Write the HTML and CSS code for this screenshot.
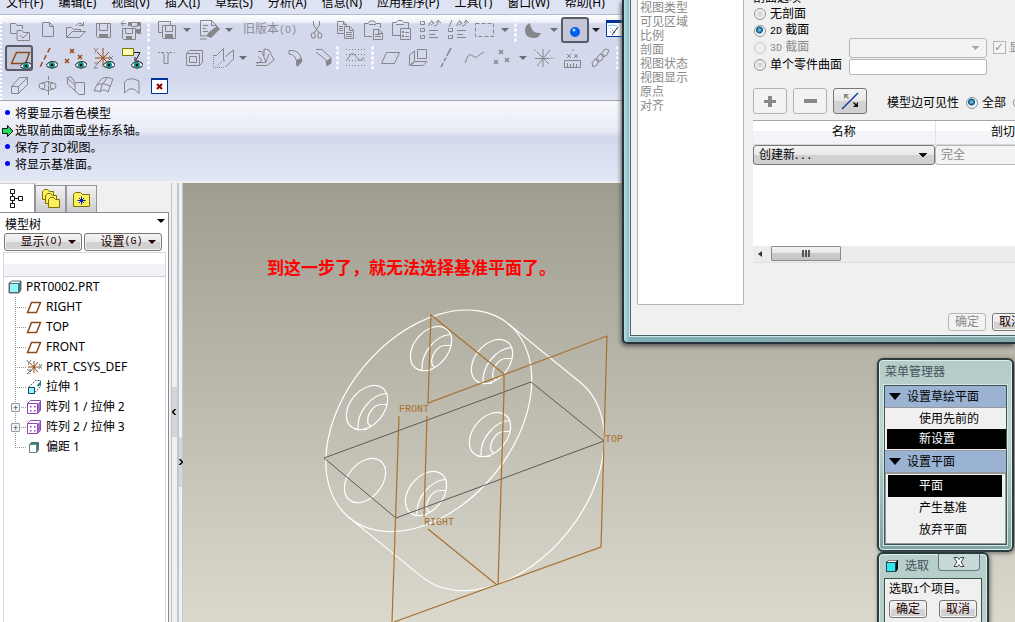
FILE: index.html
```html
<!DOCTYPE html>
<html lang="zh-CN">
<head>
<meta charset="utf-8">
<title>PRT0002.PRT</title>
<link rel="stylesheet" href="styles.css">
</head>
<body>
<svg class="defs" aria-hidden="true">
  <defs>
    <symbol id="i-plane" viewBox="0 0 16 14"><path d="M1.5 12.5L5.500 2.500H14.500L10.500 12.500Z" fill="none" stroke="#8a4a20" stroke-width="1.500"/></symbol>
    <symbol id="i-csys" viewBox="0 0 16 14"><path d="M8 1V13M2 7H14M4 3L12 12M12 2L4 12" fill="none" stroke="#8a4a20" stroke-width="1"/><path d="M1 0l2 3 2-3M3 3l-1 2M1 10h4l-4 4h4M13 4l3 5M16 4l-3 5" fill="none" stroke="#777"/></symbol>
    <symbol id="i-pattern" viewBox="0 0 14 14"><path d="M.5 3.500L3.500.500H13.500V10.500L10.500 13.500H.500Z" fill="#fff" stroke="#8a4ab0"/><path d="M11 3.500L13 1.500V10.500L11 12.500Z" fill="#a070c8"/><path d="M.500 3.500H10.500V13.500" fill="none" stroke="#8a4ab0"/><path d="M3 6h1.500v1.500H3zM7 6h1.500v1.500H7zM3 10h1.500v1.500H3zM7 10h1.500v1.500H7z" fill="#b030d8"/></symbol>
    <symbol id="i-eye" viewBox="0 0 12 8"><path d="M0 4Q6-3 12 3L11 6Q6 9 1 6Z" fill="#fff"/><path d="M0 4Q6-2 11 2L12 4M1 5Q6 9 11 5" fill="none" stroke="#333"/><circle cx="6" cy="4" r="3" fill="#109080" stroke="none"/><path d="M5 3h2v2H5z" fill="#003" stroke="none"/></symbol>
    <symbol id="i-arrow" viewBox="0 0 8 4"><path d="M0 0H8L4 4Z" fill="currentColor" stroke="none"/></symbol>
    <g id="hole-front" fill="none" stroke="#fff" stroke-width="1.200"><ellipse rx="25" ry="17" transform="rotate(-50.600)"/></g>
    <g id="hole"><use href="#hole-front"/><path d="M-9 21C-10 4 5-13 19-14M4 19L1 16C-1 7 7-3 14-3H20M-10 22H0" fill="none" stroke="#fff" stroke-width="1.200"/></g>
  </defs>
</svg>

<div class="app">
  <nav class="menubar">
    <button>文件(F)</button><button>编辑(E)</button><button>视图(V)</button><button>插入(I)</button><button>草绘(S)</button><button>分析(A)</button><button>信息(N)</button><button>应用程序(P)</button><button>工具(T)</button><button>窗口(W)</button><button>帮助(H)</button>
  </nav>

  <div class="toolbars">
    <div class="toolrow">
      <button class="tool" aria-label="设置工作目录"><svg viewBox="0 0 28 28"><path d="M17.500 13V9.500H12L10.500 7.500H5.500V17.500H11M12 23.500V14.500H17L18.500 16.500H24.500V24.500H12.500ZM15 19l3 3 5-5"/></svg></button>
      <button class="tool" aria-label="新建"><svg viewBox="0 0 28 28"><path d="M9.500 6.500H16.500L20.500 10.500V20.500H9.500ZM16.500 6.500V10.500H20.500"/></svg></button>
      <button class="tool" aria-label="打开"><svg viewBox="0 0 28 28"><path d="M5.500 21.500V11.500H10.500L12.500 13.500H19.500V15.500M5.500 21.500L11.500 15.500H24.500L18.500 21.500ZM15 10Q18 5 22 9M22.500 6V9.500H18"/></svg></button>
      <button class="tool" aria-label="保存"><svg viewBox="0 0 28 28"><path d="M7.500 7.500H21.500V21.500H8.500L7.500 20.500ZM10.500 7.500V14.500H18.500V7.500"/><path class="f" d="M10 18h9v4h-9z"/></svg></button>
      <button class="tool" aria-label="保存副本"><svg viewBox="0 0 28 28"><path d="M5.500 12.500H18.500V23.500H6.500L5.500 22.500ZM8.500 12.500V17.500H15.500V12.500M11.500 10V6.500H23.500V17.500H20M4 7.500H9M7 4.500L4 7.500L7 10M14.500 7V10.500H20.500V7"/><path class="f" d="M9 20h6v4H9zM18 13h5v4h-5zM12 7h3v3h-3zM20 7h3v3h-3z"/></svg></button>
      <i class="grip"></i>
      <button class="tool" aria-label="保存状态"><svg viewBox="0 0 28 28"><path d="M10.500 16.500H6.500V5.500H18.500V9M10.500 9.500H23.500V22.500H11.500L10.500 21.500ZM13.500 9.500V15.500H20.500V9.500"/><path class="f" d="M13 18h8v4h-8z"/></svg></button>
      <button class="drop" aria-label="更多"><svg><use href="#i-arrow"/></svg></button>
      <button class="tool" aria-label="编辑"><svg viewBox="0 0 28 28"><path d="M12 20H6.500V4.500H17.500L22.500 9.500V11M17.500 4.500V9.500H22.500M9 9.500h5M9 12.500h3M9 15.500h5M6 23h7"/><path class="f" d="M23 10l3 3-9 9-5-2 3-4z"/></svg></button>
      <button class="drop" aria-label="更多"><svg><use href="#i-arrow"/></svg></button>
      <button class="version" disabled>旧版本<span class="mono">(O)</span></button>
      <button class="tool" aria-label="剪切"><svg viewBox="0 0 28 28"><path d="M11.500 5L11.500 9L17 17M17.500 5V9L12 17M13 16L9 18L10 22H13V17M16 16L20 18L19 22H16V17"/></svg></button>
      <button class="tool" aria-label="复制"><svg viewBox="0 0 28 28"><path d="M14 17.500H7.500V5.500H13.500L16.500 8.500V10M14.500 10.500H20L23.500 14V22.500H14.500ZM13.500 5.500V8.500H16.500M19.500 10.500V14.500H23.500M9 10.500h4M9 12.500h4M9 14.500h4M16 16.500h6M16 18.500h6M16 20.500h6"/></svg></button>
      <button class="tool" aria-label="粘贴"><svg viewBox="0 0 28 28"><path d="M14 20.500H6.500V7.500H10L12 5H16L18 7.500H22.500V12M11 8.500H18M15.500 13.500H21L24.500 17V23.500H15.500ZM20.500 13.500V17.500H24.500M17 18.500h5M17 20.500h6"/></svg></button>
      <button class="tool" aria-label="选择性粘贴"><svg viewBox="0 0 28 28"><path d="M14 19.500H6.500V6.500H10L12 4.500H16L18 6.500H22.500V12M10 8.500H18M14.500 12.500H24.500V23.500H14.500ZM19 16.500h4M19 20.500h4"/><path class="f" d="M16 15h2v2h-2zM16 19h2v2h-2z"/></svg></button>
      <button class="tool" aria-label="再生"><svg viewBox="0 0 28 28"><path d="M6.500 5V8.500H10.500V5.500H8M6.500 12V15.500H10.500V12.500H8M6.500 19V22.500H10.500V19.500H8M15 10Q15 5 19 6M17 4l3 3-3 2M20 10Q25 9 24 5M22 7l2-3 3 3M15 14.500h9M15 18.500h6M15 21.500h9"/></svg></button>
      <button class="tool" aria-label="再生管理器"><svg viewBox="0 0 28 28"><path d="M7 11l3-7M6.500 12V15.500H10.500V12.500H8M6.500 19V22.500H10.500V19.500H8M15 10Q15 5 19 6M17 4l3 3-3 2M20 10Q25 9 24 5M22 7l2-3 3 3M15 14.500h9M15 18.500h6M15 21.500h9"/></svg></button>
      <button class="tool" aria-label="选择框"><svg viewBox="0 0 28 28"><path stroke-dasharray="4 2" d="M5.500 7.500H23.500V20.500H5.500Z"/></svg></button>
      <button class="drop" aria-label="更多"><svg><use href="#i-arrow"/></svg></button>
      <i class="grip"></i>
      <button class="tool" aria-label="着色"><svg viewBox="0 0 28 28"><path class="f" d="M11 7Q6 9 6 14Q6 22 15 22Q20 22 22 17Q12 18 11 7Z"/></svg></button>
      <button class="drop" aria-label="更多"><svg><use href="#i-arrow"/></svg></button>
      <button class="tool pressed" aria-label="显示样式"><svg viewBox="0 0 28 28"><circle cx="14" cy="16" r="5" fill="#0060f0" stroke="none"/><circle cx="13" cy="14" r="1.500" fill="#b0e0ff" stroke="none"/></svg></button>
      <button class="drop dark" aria-label="更多"><svg><use href="#i-arrow"/></svg></button>
      <button class="tool" aria-label="重定向"><svg viewBox="0 0 28 28"><path d="M3.500 5.500H23V20.500H3.500Z" fill="#fff" stroke="#003399"/><path d="M3 4h20v3H3z" fill="#003399" stroke="none"/><path d="M5 10Q9 8 14 10" stroke="#80c0e8"/><path stroke-dasharray="1 2" d="M7 12l6 6M7 16h6" stroke="#2070c0"/><path d="M9 19l6-8" stroke="#223"/></svg></button>
    </div>
    <div class="toolrow">
      <button class="tool pressed" aria-label="基准平面显示"><svg viewBox="0 0 28 28"><path d="M6.500 19.500L11.500 8.500H24.500L20.500 19.500Z" stroke="#8a4a20" stroke-width="1.500"/><use href="#i-eye" x="15" y="18" width="12" height="8"/></svg></button>
      <button class="tool" aria-label="基准轴显示"><svg viewBox="0 0 28 28"><path d="M17 4L7 23" stroke="#a04a10" stroke-width="1.500" stroke-dasharray="5 3"/><use href="#i-eye" x="13" y="17" width="12" height="8"/></svg></button>
      <button class="tool" aria-label="基准点显示"><svg viewBox="0 0 28 28"><path d="M9 5l4 4m0-4l-4 4M4 15l4 4m0-4l-4 4M17 11l4 4m0-4l-4 4" stroke="#a04a10" stroke-width="1.500"/><use href="#i-eye" x="14" y="17" width="12" height="8"/></svg></button>
      <button class="tool" aria-label="坐标系显示"><svg viewBox="0 0 28 28"><path d="M14 4V23M6 14H22M8 8l12 12M20 8L8 20" stroke="#a04a10"/><path d="M5 4l2 3 2-3M7 7l-1 2M5 19h4l-4 5h4M20 12l4 4m0-4l-4 4"/><use href="#i-eye" x="14" y="17" width="12" height="8"/></svg></button>
      <button class="tool" aria-label="注释显示"><svg viewBox="0 0 28 28"><path d="M5.500 4.500H16.500V11.500H5.500Z" fill="#ffffb8" stroke="#777700"/><path d="M17 8.500H23L19 16M18 13v4h4" stroke="#222"/><use href="#i-eye" x="14" y="17" width="12" height="8"/></svg></button>
      <i class="grip"></i>
      <button class="tool" aria-label="孔"><svg viewBox="0 0 28 28"><path d="M9 8.500Q12 8 12 12V19.500H16V12Q16 8 19 8.500"/><path stroke-dasharray="2 2" d="M6 8.500H23"/></svg></button>
      <button class="tool" aria-label="壳"><svg viewBox="0 0 28 28"><path d="M6.500 9.500L9.500 6.500H22.500V18.500L19.500 21.500H6.500ZM6.500 9.500H19.500V21.500M9.500 12.500H16.500V18.500H9.500Z"/></svg></button>
      <button class="tool" aria-label="筋"><svg viewBox="0 0 28 28"><path stroke-dasharray="1 1" d="M5.500 11V23.500H17M15.500 16.500L8.500 22"/><path d="M5 11.500H8.500L15.500 4.500V16.500M15.500 16.500H17M17.500 23L25.500 15V6L17.500 12.500"/></svg></button>
      <button class="drop" aria-label="更多"><svg><use href="#i-arrow"/></svg></button>
      <button class="tool" aria-label="拔模"><svg viewBox="0 0 28 28"><path d="M8 7.500H12L16 18.500H6M6 21.500H17L24 16L19 6L14 5V12M16 18L19 10M8 12.500L12 16L7 20"/></svg></button>
      <button class="tool" aria-label="倒圆角"><svg viewBox="0 0 28 28"><path d="M11 6.500Q22 5 24 17L19 22Q19 10 11 10Z"/><path class="f" d="M18 16l6-2v4l-5 5z"/></svg></button>
      <button class="tool" aria-label="倒角"><svg viewBox="0 0 28 28"><path d="M10 5.500H16L25 14V19L21 22L20 16L10 8"/><path class="f" d="M20 17l5-3v5l-4 3z"/></svg></button>
      <i class="grip"></i>
      <button class="tool" aria-label="草绘"><svg viewBox="0 0 28 28"><path stroke-dasharray="1 2" d="M5 5.500H24M5 10.500H24M5 16.500H24M5 21.500H24"/><path d="M6 16L10 10H13L18 16H21L23 13"/></svg></button>
      <i class="grip"></i>
      <button class="tool" aria-label="平面"><svg viewBox="0 0 28 28"><path d="M5.500 19.500L10.500 8.500H23.500L18.500 19.500Z"/></svg></button>
      <button class="tool" aria-label="组合"><svg viewBox="0 0 28 28"><path d="M13.500 5.500H22.500V14.500H13.500ZM5.500 11L10.500 7V17L5.500 21.500ZM7 21.500H19L23 17.500H11Z"/></svg></button>
      <button class="tool" aria-label="轴"><svg viewBox="0 0 28 28"><path stroke-width="1.500" stroke-dasharray="9 2 4 2" d="M19 4L9 23"/></svg></button>
      <button class="tool" aria-label="曲线"><svg viewBox="0 0 28 28"><path d="M5 19L8 12Q10 9 13 12Q16 15 19 11L24 8"/></svg></button>
      <button class="tool" aria-label="点"><svg viewBox="0 0 28 28"><path stroke-width="1.500" d="M11 6l4 4m0-4l-4 4M6 16l4 4m0-4l-4 4M17 14l4 4m0-4l-4 4"/></svg></button>
      <button class="drop" aria-label="更多"><svg><use href="#i-arrow"/></svg></button>
      <button class="tool" aria-label="坐标系"><svg viewBox="0 0 28 28"><path d="M13 5V23M5 14.500H20M7 8l12 12M20 6L7 22"/><path stroke-dasharray="1 1" d="M21 14h4M4 5l3 3"/></svg></button>
      <button class="tool" aria-label="分析"><svg viewBox="0 0 28 28"><path d="M6.500 16.500H22.500V23.500H6.500ZM9.500 19v4M12.500 20v3M15.500 19v4M18.500 20v3M9 10l4 4m0-4l-4 4M16 10l4 4m0-4l-4 4M15 5v2"/></svg></button>
      <button class="tool" aria-label="参照"><svg viewBox="0 0 28 28"><path d="M6 19l3-4 4 1-2 5-4 2zM10 15l4-5 4 1-2 5-4 2zM15 10l4-5 4 1-2 5-4 2z"/></svg></button>
      <i class="grip"></i>
    </div>
    <div class="toolrow">
      <button class="tool" aria-label="拉伸"><svg viewBox="0 0 28 28"><path d="M6.500 14.500H13.500V21.500H6.500ZM6.500 14.500L14.500 5.500H22.500V12.500L13.500 21.500M13.500 14.500L22.500 5.500"/></svg></button>
      <button class="tool" aria-label="旋转"><svg viewBox="0 0 28 28"><circle cx="9" cy="14" r="3"/><circle cx="20" cy="14" r="3"/><path stroke-dasharray="4 1" d="M15.500 4V23"/><path d="M9 11Q15 8 20 11M9 17Q15 20 20 17"/></svg></button>
      <button class="tool" aria-label="扫描混合"><svg viewBox="0 0 28 28"><path d="M5.500 6L10 4.500L14 10.500H23.500V22.500H18L6.500 12V6M14 10.500V19M6 6L14 13"/></svg></button>
      <button class="tool" aria-label="边界混合"><svg viewBox="0 0 28 28"><path d="M5 19Q9 9 14 6Q19 4 24 7L19 20Q14 16 11 20Q8 18 5 19ZM8 13Q13 10 21 14M18 6Q12 12 11 20"/></svg></button>
      <button class="tool" aria-label="造型"><svg viewBox="0 0 28 28"><path d="M7.500 21V10Q12 4 22 9V21.500L17 17H12Z"/></svg></button>
      <button class="tool" aria-label="关闭"><svg viewBox="0 0 28 28"><path d="M6.500 6.500H22.500V21.500H6.500Z" fill="#fff" stroke="#003399"/><path d="M6 6h17v2H6z" fill="#003399" stroke="none"/><path d="M12 12l5 5m0-5l-5 5" stroke="#900000" stroke-width="2"/></svg></button>
    </div>
  </div>

  <ul class="messages">
    <li>将要显示着色模型</li>
    <li class="current"><svg viewBox="0 0 12 12"><path d="M.500 3.500H5.500V.500L11 6L5.500 11.500V8.500H.500Z" fill="#20e060" stroke="#111"/></svg>选取前曲面或坐标系轴。</li>
    <li>保存了3D视图。</li>
    <li>将显示基准面。</li>
  </ul>

  <main class="workspace">
    <aside class="sidebar">
      <div class="tabs">
        <button class="tab active" aria-label="模型树"><svg viewBox="0 0 16 20"><path d="M3.500 5V15M5 10.500H10" fill="none" stroke="#111"/><path d="M1.500 1.500h4v4h-4zM1.500 8.500h4v4h-4zM1.500 15.500h4v4h-4zM9.500 8.500h4v4h-4z" fill="#fff" stroke="#111"/></svg></button>
        <button class="tab" aria-label="文件夹浏览器"><svg viewBox="0 0 20 20"><path d="M1.500 10.500V2.500L3.500.500H6.500L8.500 2.500H12.500V10.500Z" fill="#fff060" stroke="#7c7000"/><path d="M4.500 14.500V6.500L6.500 4.500H9.500L11.500 6.500H15.500V14.500Z" fill="#fff060" stroke="#7c7000"/><path d="M7.500 18.500V10.500L9.500 8.500H12.500L14.500 10.500H18.500V18.500Z" fill="#fff060" stroke="#7c7000"/></svg></button>
        <button class="tab" aria-label="收藏夹"><svg viewBox="0 0 20 20"><path d="M1.500 17.500V5.500L3.500 3.500H8.500L10.500 5.500H17.500V17.500Z" fill="#fff060" stroke="#7c7000"/><path d="M9.500 7.500v8M5.500 11.500h8M7 9l5 5M12 9l-5 5" stroke="#0020b0"/></svg></button>
      </div>
      <div class="panel">
        <div class="panel-head"><span>模型树</span><svg class="caret"><use href="#i-arrow"/></svg></div>
        <div class="panel-buttons">
          <button class="btn">显示<span class="mono">(O)</span><svg class="caret"><use href="#i-arrow"/></svg></button>
          <button class="btn">设置<span class="mono">(G)</span><svg class="caret"><use href="#i-arrow"/></svg></button>
        </div>
        <div class="tree-box">
          <div class="tree-head"></div>
          <div class="root"><svg viewBox="0 0 14 14"><path d="M1 3L4 1H13V10L11 13H1Z" fill="#208888" stroke="#667"/><path d="M2 3L4 1.500H12L11 3Z" fill="#e8ffff"/><path d="M1.500 3.500H10.500V12.500H1.500Z" fill="#90f8f8" stroke="#667"/></svg>PRT0002.PRT</div>
          <ul class="tree">
            <li><svg><use href="#i-plane"/></svg>RIGHT</li>
            <li><svg><use href="#i-plane"/></svg>TOP</li>
            <li><svg><use href="#i-plane"/></svg>FRONT</li>
            <li><svg><use href="#i-csys"/></svg>PRT_CSYS_DEF</li>
            <li><svg viewBox="0 0 16 14"><path d="M2.500 7.500H8.500V13.500H2.500Z" fill="#90f8f8" stroke="#246"/><path d="M2.500 7.500L9.500.500H14.500V6.500L8.500 13" fill="none" stroke="#555" stroke-dasharray="2 1"/><path d="M11 5l4-4v3l-3 3z" fill="#208888"/></svg>拉伸 1</li>
            <li><button class="expand" aria-label="展开">+</button><svg><use href="#i-pattern"/></svg>阵列 1 / 拉伸 2</li>
            <li><button class="expand" aria-label="展开">+</button><svg><use href="#i-pattern"/></svg>阵列 2 / 拉伸 3</li>
            <li><svg viewBox="0 0 16 14"><path d="M3.500 4.500L5.500 2.500H12.500V9.500L10.500 12.500H3.500Z" fill="#208888" stroke="#666"/><path d="M3.500 4.500H10.500V12.500H3.500Z" fill="#fff" stroke="#687"/></svg>偏距 1</li>
          </ul>
        </div>
      </div>
    </aside>
    <div class="splitter"><button aria-label="收起"><svg viewBox="0 0 4 6"><path d="M3.500 0L.500 3L3.500 6"/></svg></button></div>
    <div class="splitter second"><button aria-label="展开"><svg viewBox="0 0 4 6"><path d="M.500 0L3.500 3L.500 6"/></svg></button></div>
    <section class="canvas">
      <svg viewBox="183 183 832 439" width="832" height="439">
        <g fill="none" stroke="#fff" stroke-width="1.200">
          <ellipse cx="428.800" cy="420.800" rx="125.400" ry="84.600" transform="rotate(-50.600 428.800 420.800)"/>
          <path d="M508.200 323.700L580.700 382.700A125.400 84.600 -50.600 0 1 421.900 576.900L349.400 517.900"/>
        </g>
        <use href="#hole" x="431" y="348.500"/><use href="#hole" x="492" y="361.500"/><use href="#hole" x="367" y="407.500"/><use href="#hole" x="490" y="434.500"/><use href="#hole-front" x="365" y="480.500"/><use href="#hole" x="426" y="493.500"/>
        <path d="M324 458L531 382L604 441L396 518Z" fill="none" stroke="#5e5a55"/>
        <path d="M504 374L431 315L428 403L607 336L601 547L394 622M504 374L504 392L498 585M399 416L392 622M427 416L424 517M428 529L497 585" fill="none" stroke="#a8702f" stroke-width="1.200"/>
        <g class="labels"><text x="399" y="412">FRONT</text><text x="605" y="442">TOP</text><text x="424" y="525">RIGHT</text></g>
        <text class="note" x="267" y="274">到这一步了，就无法选择基准平面了。</text>
      </svg>
    </section>
  </main>
</div>

<section class="window dialog">
  <div class="dialog-body">
    <ul class="categories"><li>视图类型</li><li>可见区域</li><li>比例</li><li>剖面</li><li>视图状态</li><li>视图显示</li><li>原点</li><li>对齐</li></ul>
    <form class="options">
      <h2>剖面选项</h2>
      <div class="choices">
        <label><input type="radio" name="sec">无剖面</label>
        <label><input type="radio" name="sec" checked><span><span class="mono">2D</span> 截面</span></label>
        <label class="off"><input type="radio" name="sec" disabled><span><span class="mono">3D</span> 截面</span></label>
        <label><input type="radio" name="sec">单个零件曲面</label>
        <select class="section-select" aria-label="截面" disabled><option></option></select>
        <label class="off show"><input type="checkbox" checked disabled>显示</label>
        <input class="surface" type="text" aria-label="曲面">
      </div>
      <div class="actions">
        <button type="button" class="square" disabled aria-label="添加"><svg viewBox="0 0 32 24"><path d="M10 11H14V7H18V11H22V14H18V18H14V14H10Z" fill="#888"/></svg></button>
        <button type="button" class="square" disabled aria-label="移除"><svg viewBox="0 0 32 24"><path d="M10 10H23V14H10Z" fill="#888"/></svg></button>
        <button type="button" class="square live" aria-label="反向"><svg viewBox="0 0 32 24"><path d="M8 20L24 4" stroke="#1238a8" stroke-width="1.500"/><path d="M10 5h5l-2 2 2 2-1 1-2-2-2 2z" fill="#8a8a80"/><path d="M24 18v-5l-2 2-2-2-1 1 2 2-2 2z" fill="#111"/></svg></button>
        <span class="edge-label">模型边可见性</span>
        <label><input type="radio" name="edge" checked>全部</label>
        <label><input type="radio" name="edge">区域</label>
      </div>
      <div class="grid">
        <table>
          <thead><tr><th>名称</th><th>剖切区域</th></tr></thead>
          <tbody><tr><td><select aria-label="名称"><option>创建新. . .</option></select></td><td><select aria-label="剖切区域" disabled><option>完全</option></select></td></tr></tbody>
        </table>
        <div class="scrollbar"><svg viewBox="0 0 4 6"><path d="M4 0V6L0 3Z" fill="#333"/></svg><span class="thumb"><svg viewBox="0 0 8 7"><path d="M1 0V7M4 0V7M7 0V7" stroke="#555" stroke-width="2"/></svg></span></div>
      </div>
      <div class="footer"><button type="button" class="btn" disabled>确定</button><button type="button" class="btn">取消</button></div>
    </form>
  </div>
</section>

<section class="window manager">
  <h2>菜单管理器</h2>
  <div class="menu">
    <h3><svg viewBox="0 0 12 7"><path d="M0 0H12L6 7Z"/></svg>设置草绘平面</h3>
    <div class="items"><button>使用先前的</button><button class="on">新设置</button></div>
    <h3><svg viewBox="0 0 12 7"><path d="M0 0H12L6 7Z"/></svg>设置平面</h3>
    <div class="items tall"><button class="on">平面</button><button>产生基准</button><button>放弃平面</button></div>
  </div>
</section>

<section class="window picker">
  <header><svg class="cube" viewBox="0 0 14 14"><path d="M1 3L4 1H13V10L11 13H1Z" fill="#111"/><path d="M1.500 3.500H10.500V12.500H1.500Z" fill="#30e8f0" stroke="#245"/><path d="M2 3L4 1.500H12L11 3Z" fill="#fff"/></svg><h2>选取</h2><button class="close" aria-label="关闭"><svg viewBox="0 0 12 10"><path d="M1 .500H4.500L6 2.500L7.500.500H11L8 5L11 9.500H7.500L6 7.500L4.500 9.500H1L4 5Z" fill="#fff" stroke="#444"/></svg></button></header>
  <div class="picker-body">
    <p>选取<span class="mono">1</span>个项目。</p>
    <div class="picker-actions"><button class="btn">确定</button><button class="btn">取消</button></div>
  </div>
</section>
</body>
</html>
```
FILE: styles.css
```css
* { box-sizing: border-box; }
body {
  margin: 0;
  height: 100vh;
  position: relative;
  overflow: hidden;
  font: 12px/14px "Noto Sans", "Noto Sans CJK SC", sans-serif;
  color: #000;
}
button, input, select { font: inherit; color: inherit; margin: 0; padding: 0; }
button { background: none; border: 0; white-space: nowrap; }
ul { list-style: none; margin: 0; padding: 0; }
h2, h3, p { font-size: 12px; font-weight: normal; margin: 0; }
svg { display: block; flex: none; }
.defs { position: absolute; width: 0; height: 0; }
.mono { font-family: "Liberation Mono", monospace; font-size: 10px; }

.app { display: flex; flex-direction: column; height: 100%; background: #f0f0f0; }

.menubar {
  display: flex;
  align-items: flex-end;
  flex: none;
  gap: 15px;
  height: 15px;
  padding: 0 6px 3px;
  overflow: hidden;
  border-bottom: 1px solid #b4b9d0;
  background: #dee3f3;
}
.menubar button { line-height: 16px; }

.toolbars {
  flex: none;
  padding: 1px 0 0 3px;
  border-left: 2px dotted #fff;
  background: linear-gradient(#fff, #eff1f9 7px, #d3d8ec 9px, #d3d8ec 65px, #e0e5f5);
}
.toolrow { display: flex; height: 28px; }
.tool, .drop { display: flex; align-items: center; justify-content: center; flex: none; }
.tool { width: 28px; }
.tool svg { width: 28px; height: 28px; fill: none; stroke: #858688; }
.tool .f { fill: #858688; stroke: none; }
.tool.pressed { border: 2px solid #575b69; border-radius: 3px; background: #c3c7d6; margin: 1px 0; overflow: hidden; }
.tool.pressed svg { margin: -2px; }
.drop { width: 14px; color: #6c6e73; }
.drop.dark { color: #222; }
.drop svg { width: 8px; height: 4px; }
.version { width: 66px; color: #8a8c94; padding: 0 0 0 7px; text-align: left; }
.grip { width: 7px; flex: none; margin: 2px 0; background: radial-gradient(circle, #fff 1px, transparent 2px) center / 7px 5px repeat-y; }

.messages { flex: none; padding: 4px 0 8px; border-top: 1px solid #a4a6ac; background: linear-gradient(#f7f8fc, #e8ebf6 30px, #d3d9ec 36px, #e2e7f6); }
.messages li { display: flex; align-items: center; gap: 5px; height: 17px; padding-left: 5px; }
.messages li::before { content: ""; width: 5px; height: 5px; margin-bottom: 2px; border-radius: 50%; background: #0000f0; flex: none; }
.messages .current { gap: 1px; padding-left: 2px; }
.messages .current::before { display: none; }
.messages svg { width: 12px; height: 12px; }

.workspace { display: flex; flex: 1; min-height: 0; padding-top: 2px; }
.sidebar { display: flex; flex-direction: column; width: 169px; flex: none; }
.tabs { display: flex; align-items: flex-end; height: 29px; }
.tab { display: flex; align-items: center; justify-content: center; width: 31px; height: 27px; border: 1px solid #9295a0; border-bottom: 0; background: linear-gradient(#f2f2f2, #cdcdcd); }
.tab svg { width: 20px; height: 20px; }
.tab.active { width: 35px; height: 29px; background: #fff; border-left: 0; border-top-color: #ccc; }
.panel { display: flex; flex-direction: column; flex: 1; background: #fff; border-right: 1px solid #888c98; border-top: 1px solid #888c98; padding: 0 2px 0 3px; }
.panel-head { display: flex; justify-content: space-between; padding: 5px 1px 1px 2px; }
.panel-head .caret { margin-top: 1px; }
.caret { width: 8px; height: 4px; }
.panel-buttons { display: flex; gap: 2px; padding: 0 4px 1px 1px; }
.btn { display: flex; align-items: center; justify-content: center; height: 18px; border: 1px solid #777; border-radius: 3px; background: linear-gradient(#f4f4f4, #e8e8e8 50%, #d2d2d2 50%, #d0d0d0); color: #200; box-shadow: inset 0 0 0 1px #f4f4f4; }
.btn:disabled { color: #8a8a8a; border-color: #b4b8b8; background: #f2f2f2; }
.panel-buttons .btn { flex: 1; padding-left: 10px; }
.panel-buttons .caret { margin-left: 5px; }
.tree-box { flex: 1; border: 1px solid #d8d8de; border-bottom: 0; }
.tree-head { height: 24px; border-bottom: 1px solid #d0d0d4; background: linear-gradient(#fff 50%, #f2f3f6 50%); }
.root { display: flex; align-items: center; gap: 4px; height: 20px; padding-left: 4px; }
.root svg { width: 14px; height: 14px; }
.tree { margin-left: 11px; background: repeating-linear-gradient(#999 0 1px, transparent 1px 2px) 0 0 / 1px 150px no-repeat; }
.tree li { position: relative; display: flex; align-items: center; gap: 4px; height: 20px; padding-left: 11px; background: repeating-linear-gradient(90deg, #999 0 1px, transparent 1px 2px) 0 10px / 11px 1px no-repeat; }
.tree svg { width: 16px; height: 14px; }
.expand { position: absolute; left: -4px; top: 6px; width: 9px; height: 9px; border: 1px solid #999; border-radius: 1px; background: #f4f4f4; color: #1c3c90; font-size: 9px; line-height: 7px; }
.splitter { display: flex; flex-direction: column; width: 8px; flex: none; margin-left: 2px; border-left: 1px solid #bcc5ce; border-right: 2px solid #b8cada; background: #f0f0f0; padding-top: 204px; }
.splitter.second { width: 4px; margin: 0; border-left: 0; border-right: 1px solid #b8cada; padding-top: 254px; }
.splitter button { display: flex; align-items: center; height: 50px; background: #d6d6d8; }
.splitter svg { width: 4px; height: 6px; fill: none; stroke: #000; stroke-width: 1.5; }
.canvas { flex: 1; min-width: 0; overflow: hidden; background: linear-gradient(#9f9c90, #dbd9cd); }
.labels { font: 10px "Liberation Mono", monospace; fill: #a8702f; }
.note { font: bold 17px "Noto Sans CJK SC", sans-serif; fill: #f00; }

.window { position: absolute; }
.dialog { left: 622px; right: 0; top: 0; overflow: hidden; border: solid #27333a; border-width: 0 0 2px 2px; border-bottom-left-radius: 5px; padding: 0 0 6px 6px; background: linear-gradient(90deg, #b9dde6, #80b0b6 6px, #86acae 60%, #85a9aa); box-shadow: -1px 2px 4px #555; }
.dialog-body { display: flex; gap: 9px; height: 336px; padding-left: 6px; border-left: 1px solid #49636b; border-bottom: 1px solid #49636b; background: #f0f0f0; outline: 1px solid #cce8ec; }
.categories { width: 107px; flex: none; height: 305px; padding: 1px 0 0 2px; border: 1px solid #b4b4b4; border-top: 0; border-radius: 0 0 2px 2px; background: #fff; color: #8a8a8a; }
.options { flex: none; width: 420px; }
.options h2 { height: 5px; display: flex; align-items: flex-end; }
.choices { display: grid; grid-template: repeat(4, 17px) / 96px 138px 1fr; align-items: center; }
.options label { display: flex; align-items: center; gap: 4px; grid-column: 1; white-space: nowrap; }
.options .off { color: #8a8a8a; }
input[type="radio"] { appearance: none; width: 12px; height: 12px; border: 1px solid #8f9497; border-radius: 50%; background: radial-gradient(#ccc, #f4f4f4 5px); margin-left: 1px; flex: none; }
input[type="radio"]:checked { background: radial-gradient(circle at 45% 40%, #80e0ff, #0a5080 3px, #f4f4f4 4px); }
input[type="radio"]:disabled { border-color: #c8c8c8; background: #eee; }
input[type="checkbox"] { appearance: none; width: 13px; height: 13px; border: 1px solid #b4b4b4; background: #f4f4f4; flex: none; }
input[type="checkbox"]::before { content: "✓"; display: block; font: bold 12px/11px "DejaVu Sans", sans-serif; color: #999; }
.options .section-select { grid-area: 3 / 2; height: 20px; }
.options .show { grid-area: 3 / 3; padding-left: 6px; gap: 3px; }
.options .surface { grid-area: 4 / 2; height: 16px; border: 1px solid #b4b8b8; border-radius: 2px; align-self: end; min-width: 0; margin-bottom: -2px; }
.options select { appearance: none; width: 100%; border: 1px solid #777; border-radius: 3px; padding: 0 5px; opacity: 1; background: linear-gradient(45deg, transparent 50%, #111 50%) right 11px center / 4px 4px no-repeat, linear-gradient(-45deg, transparent 50%, #111 50%) right 7px center / 4px 4px no-repeat, linear-gradient(#f4f4f4, #e8e8e8 50%, #d2d2d2 50%, #d0d0d0); }
.options select { background: conic-gradient(from -45deg at 50% 100%, #111 90deg, transparent 0) right 7px center / 8px 4px no-repeat, linear-gradient(#f4f4f4, #e8e8e8 50%, #d2d2d2 50%, #d0d0d0); }
.options select:disabled { border-color: #b4b8b8; color: #8a8a8a; background: conic-gradient(from -45deg at 50% 100%, #aaa 90deg, transparent 0) right 7px center / 8px 4px no-repeat, #f3f3f3; }
.actions { display: flex; align-items: center; gap: 6px; padding: 15px 0 6px; }
.square { display: flex; align-items: center; justify-content: center; width: 34px; height: 26px; border: 1px solid #b0b4b4; border-radius: 3px; background: #f3f3f3; }
.square.live { border-color: #777; background: linear-gradient(#f4f4f4, #e8e8e8 50%, #d2d2d2 50%, #d0d0d0); }
.square svg { width: 32px; height: 24px; fill: none; }
.edge-label { margin: 4px 0 0 14px; }
.actions label { padding-top: 4px; }
.grid { background: #fff; border: 1px solid #dde; border-top: 1px solid #a4a8ac; border-left-width: 0; }
.grid table { width: 342px; table-layout: fixed; border-collapse: collapse; }
.grid th { height: 23px; padding: 0; font-weight: normal; border-right: 1px solid #e0e2e8; border-bottom: 1px solid #d4d8de; background: linear-gradient(#fff 45%, #f2f4f7 45%); }
.grid th:first-child { width: 182px; }
.grid th:last-child { width: 160px; }
.grid td { height: 20px; padding: 0; }
.grid td select { display: block; height: 20px; }
.scrollbar { display: flex; align-items: center; gap: 9px; height: 16px; margin-top: 81px; padding-left: 5px; background: #ececec; }
.scrollbar svg { width: 4px; height: 6px; }
.thumb { display: flex; align-items: center; justify-content: center; width: 70px; height: 15px; border: 1px solid #8a8c8c; border-radius: 1px; background: linear-gradient(#f4f4f4, #e4e4e4 50%, #ccc 50%, #c4c4c4); }
.thumb svg { width: 8px; height: 7px; }
.footer { display: flex; gap: 6px; padding: 50px 0 0 195px; }
.footer .btn { width: 38px; }

.manager, .picker { border: 2px solid #2a3b3e; border-radius: 6px; background: linear-gradient(#b4cbc9, #bfd5d2 40%, #7fa5a3); box-shadow: 1px 1px 4px #666, inset 0 0 0 1px #dceeec; }
.manager { left: 877px; top: 358px; width: 137px; padding: 5px; }
.manager h2, .picker h2 { color: #445356; }
.manager h2 { padding: 0 0 6px 1px; }
.menu { border: 1px solid #405254; background: #f0f0f0; outline: 1px solid #d5e8e6; }
.menu h3 { display: flex; align-items: center; gap: 6px; height: 22px; padding-left: 4px; background: #9ab3d3; border-bottom: 1px solid #999; }
.menu h3 svg { width: 12px; height: 7px; }
.items { display: flex; flex-direction: column; padding: 1px 0 1px 2px; border-bottom: 1px solid #999; }
.items button { height: 20px; padding-left: 32px; text-align: left; }
.items .on { background: #000; color: #fff; }
.items.tall { padding: 1px 3px 2px 2px; border: 1px solid #999; }
.items.tall button { height: 22px; padding-left: 31px; }
.picker { left: 877px; top: 552px; width: 112px; padding: 0 5px 6px; background: #b7cecb; }
.picker header { display: flex; align-items: center; gap: 6px; height: 24px; padding-left: 1px; }
.cube { width: 14px; height: 14px; }
.close { display: flex; align-items: center; justify-content: center; align-self: flex-start; width: 42px; height: 17px; margin-left: 3px; border: 1px solid #64797b; border-top: 0; border-radius: 0 0 4px 4px; background: #c7d9d6; }
.close svg { width: 12px; height: 10px; }
.picker-body { border: 1px solid #405254; background: #f0f0f0; padding: 3px 4px 4px; }
.picker-actions { display: flex; justify-content: space-between; padding-top: 2px; }
.picker-actions .btn { width: 38px; }
```
